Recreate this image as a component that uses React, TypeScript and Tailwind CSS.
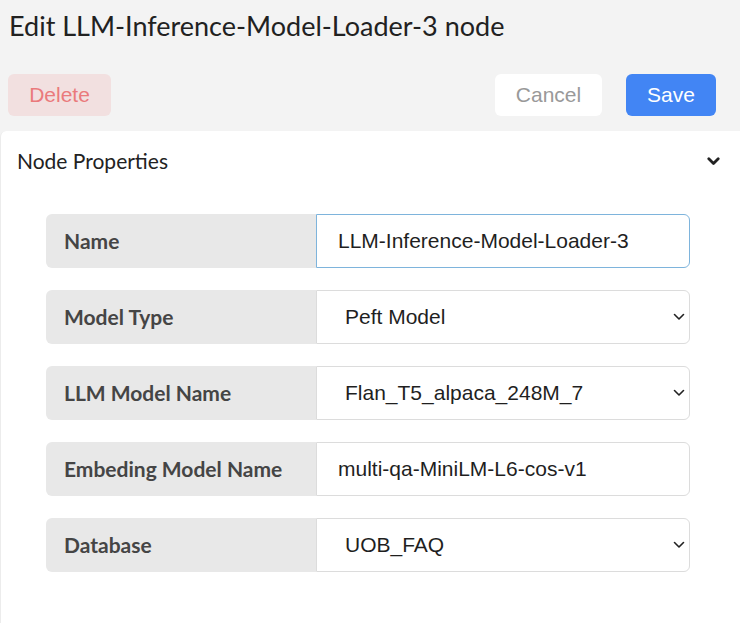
import React from "react";

const lato = { fontFamily: "Lato, 'Noto Sans', sans-serif" };
const arial = { fontFamily: "'Liberation Sans', Arial, sans-serif" };

type Field = { label: string; value: string; kind: "input" | "select"; focused?: boolean };

const fields: Field[] = [
  { label: "Name", value: "LLM-Inference-Model-Loader-3", kind: "input", focused: true },
  { label: "Model Type", value: "Peft Model", kind: "select" },
  { label: "LLM Model Name", value: "Flan_T5_alpaca_248M_7", kind: "select" },
  { label: "Embeding Model Name", value: "multi-qa-MiniLM-L6-cos-v1", kind: "input" },
  { label: "Database", value: "UOB_FAQ", kind: "select" },
];

function SelectChevron() {
  return (
    <svg width="12" height="8" viewBox="0 0 12 8" className="absolute right-[4px] top-1/2 -translate-y-1/2">
      <path d="M1.5 1.5 L6 6 L10.5 1.5" fill="none" stroke="#222" strokeWidth="1.6" strokeLinecap="round" strokeLinejoin="round" />
    </svg>
  );
}

function FieldRow({ field }: { field: Field }) {
  const border = field.focused ? "border-[#7eb4dc]" : "border-[#dcdcdc]";
  return (
    <div className="flex h-[54px]">
      <div
        className="flex w-[270px] items-center rounded-l-[6px] bg-[#e8e8e8] pl-[18px] text-[21px] font-bold text-[#454545]"
        style={lato}
      >
        {field.label}
      </div>
      <div className={`relative flex flex-1 items-center rounded-r-[6px] border bg-white ${border}`}>
        <span
          className={`text-[21px] text-[#1f1f1f] ${field.kind === "select" ? "pl-[28px]" : "pl-[21px]"}`}
          style={arial}
        >
          {field.value}
        </span>
        {field.kind === "select" && <SelectChevron />}
      </div>
    </div>
  );
}

export default function App() {
  return (
    <div className="flex h-[623px] w-[740px] flex-col overflow-hidden bg-[#f3f3f3]">
      <div className="px-[9px] pt-[8px]">
        <h1 className="text-[27px] leading-[36px] text-[#212121]" style={lato}>
          Edit LLM-Inference-Model-Loader-3 node
        </h1>
      </div>
      <div className="mt-[30px] flex items-center pl-[8px] pr-[24px]">
        <button
          className="h-[42px] w-[103px] rounded-[6px] bg-[#f2e0e0] text-[21px] text-[#ea7a7c]"
          style={arial}
        >
          Delete
        </button>
        <div className="flex-1" />
        <button
          className="h-[42px] w-[107px] rounded-[6px] bg-white text-[21px] text-[#999]"
          style={arial}
        >
          Cancel
        </button>
        <button
          className="ml-[24px] h-[42px] w-[90px] rounded-[6px] bg-[#4285f4] text-[21px] text-white"
          style={arial}
        >
          Save
        </button>
      </div>
      <div className="mt-[15px] flex-1 rounded-tl-[6px] border-l border-[#ececec] bg-white">
        <div className="flex h-[60px] items-center justify-between pl-[16px] pr-[20px]">
          <span className="text-[21px] text-[#222]" style={lato}>
            Node Properties
          </span>
          <svg width="13" height="9" viewBox="0 0 13 9">
            <path d="M1.8 1.8 L6.5 6.5 L11.2 1.8" fill="none" stroke="#222" strokeWidth="2.8" strokeLinecap="round" strokeLinejoin="round" />
          </svg>
        </div>
        <div className="ml-[45px] mt-[23px] flex w-[644px] flex-col gap-[22px]">
          {fields.map((f) => (
            <FieldRow key={f.label} field={f} />
          ))}
        </div>
      </div>
    </div>
  );
}
